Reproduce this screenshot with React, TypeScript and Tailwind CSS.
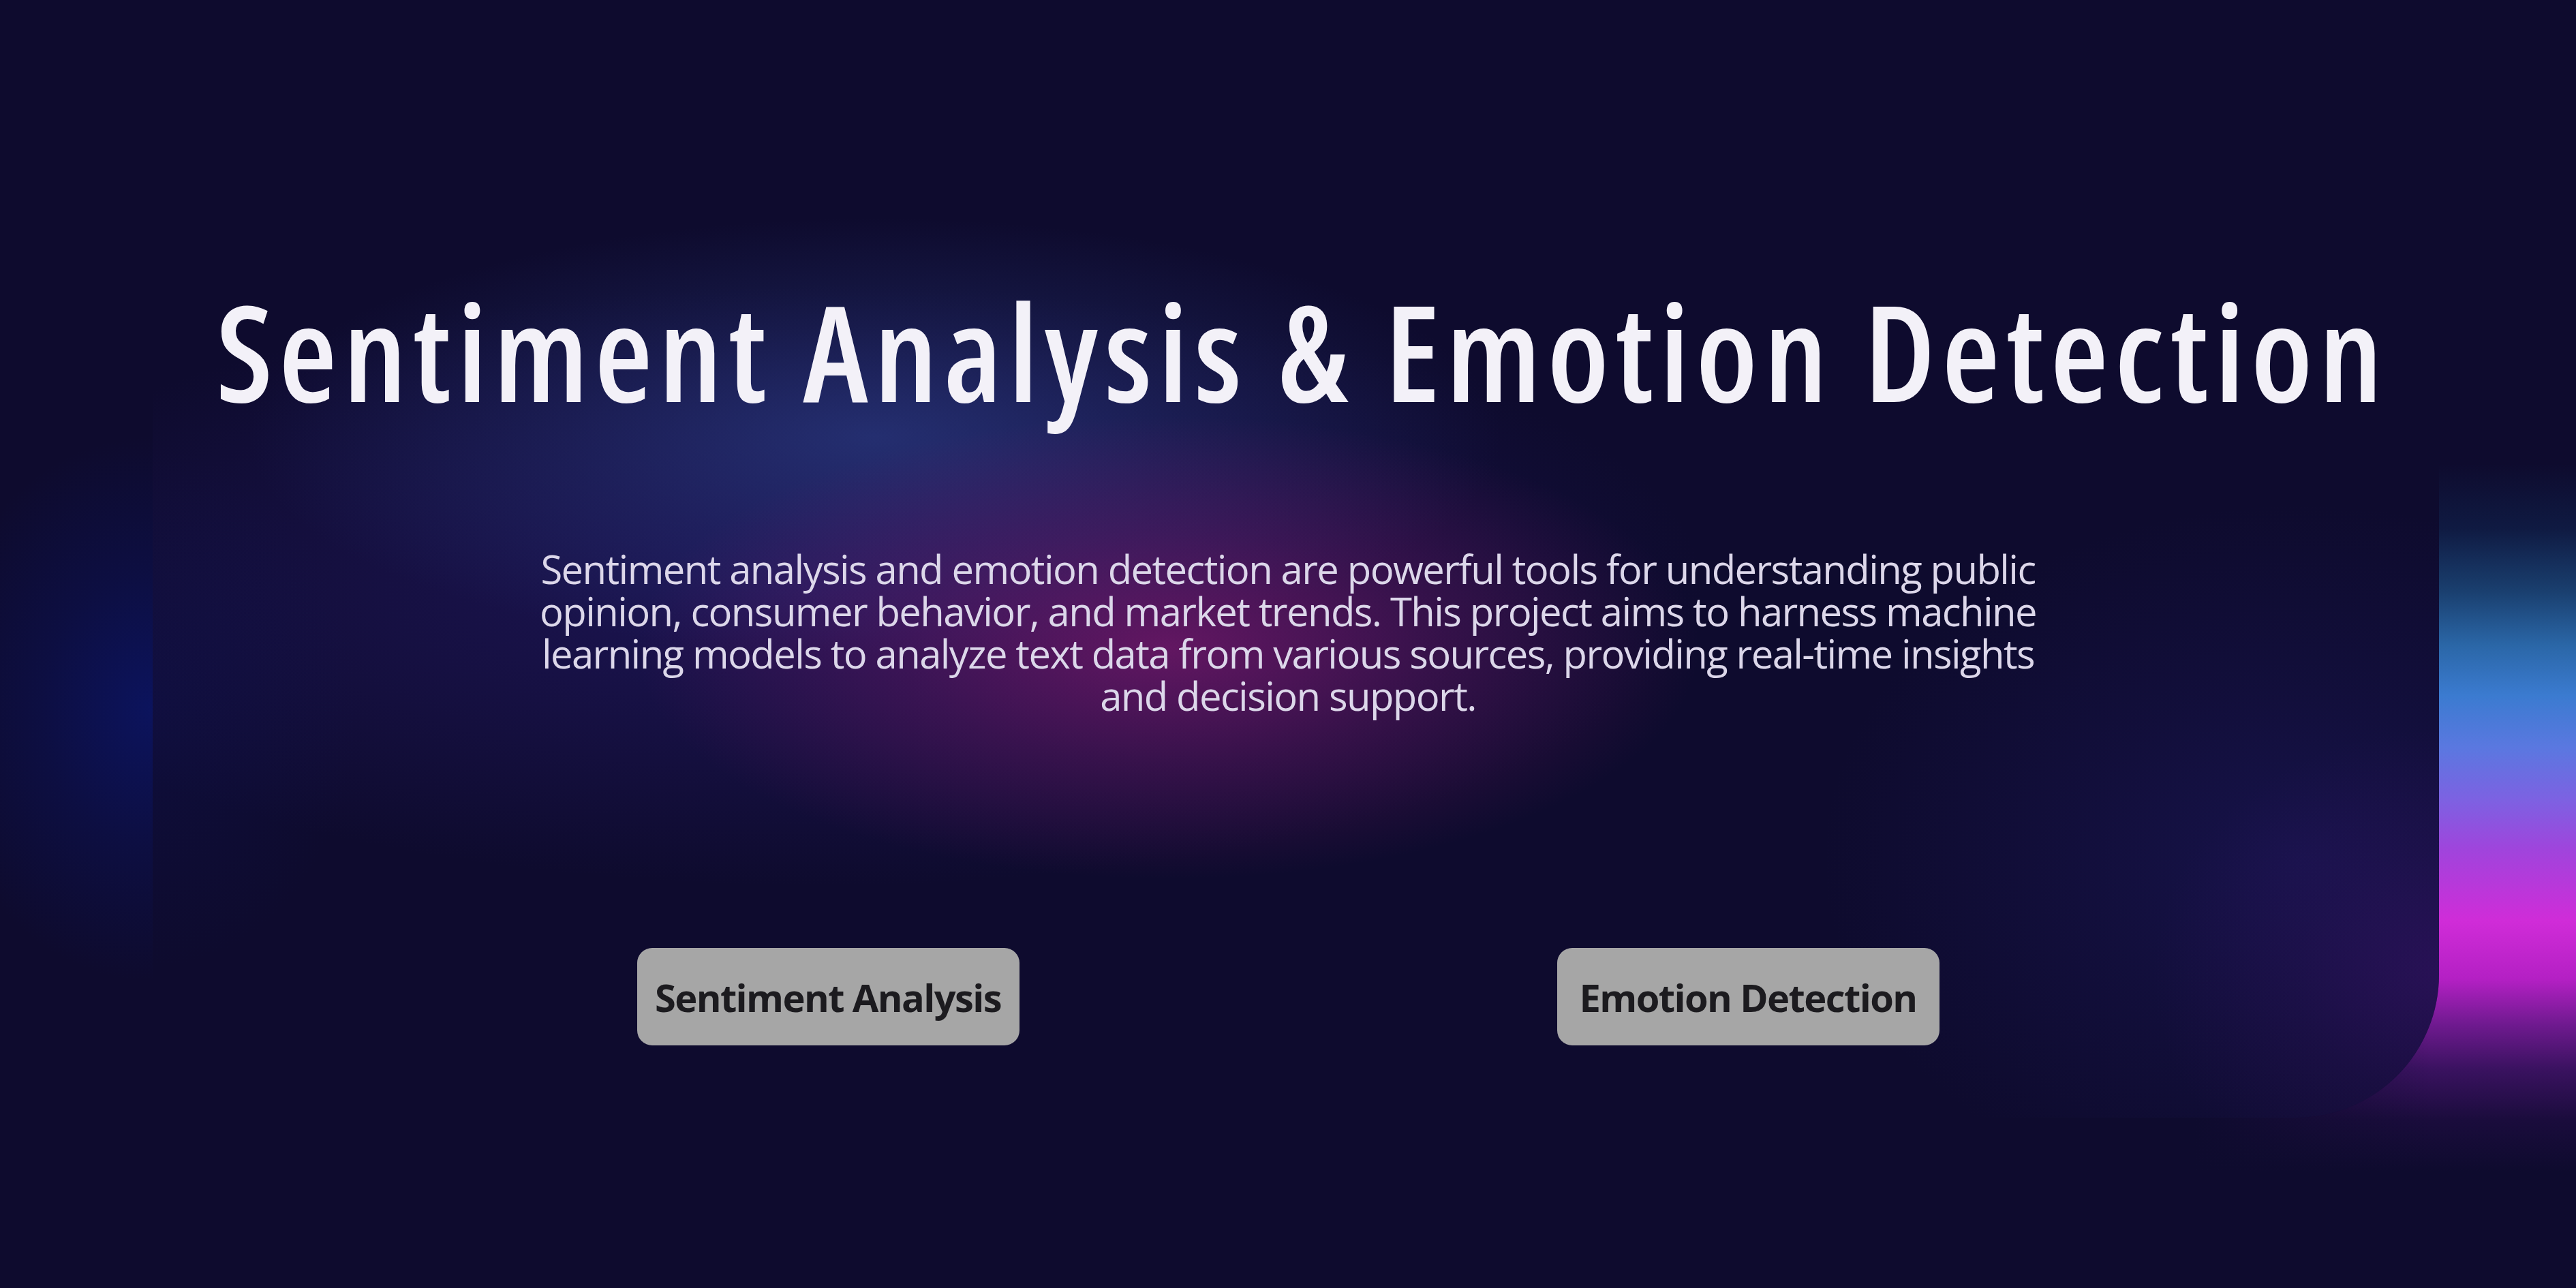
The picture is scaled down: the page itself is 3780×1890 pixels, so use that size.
import React from "react";

export default function App() {
  return (
    <div className="relative w-[3780px] h-[1890px] overflow-hidden bg-[#0e0b2e] font-['Open_Sans','Noto_Sans',sans-serif]">
      {/* outside-left blue glow */}
      <div className="absolute inset-0 bg-[radial-gradient(ellipse_330px_400px_at_224px_1040px,rgba(10,25,125,0.6),rgba(10,25,125,0.25)_50%,transparent_100%)]" />
      {/* right gradient strip */}
      <div className="absolute right-0 top-0 bottom-0 w-[560px] bg-[linear-gradient(to_bottom,#0e0b2e_0%,#0e0b2e_36%,#0f1a42_41%,#1a4070_46%,#2a66a6_50%,#3b7bd0_54%,#5a78e0_58%,#7c62e2_62%,#a044dc_66%,#d02cd8_71.5%,#b420c4_76%,#701a90_79.5%,#3a1260_83%,#1a0c3c_87%,#0e0b2e_91%,#0e0b2e_100%)]" />
      <div className="absolute right-0 top-0 bottom-0 w-[560px] bg-[linear-gradient(to_right,#0e0b2e_0%,rgba(14,11,46,0.45)_30%,rgba(14,11,46,0)_62%,rgba(14,11,46,0)_100%)]" />
      {/* main panel */}
      <div className="absolute left-[224px] right-[201px] top-0 bottom-[250px] rounded-br-[210px] overflow-hidden bg-[#0e0b2e]">
        <div className="absolute inset-0 bg-[radial-gradient(ellipse_1300px_440px_at_976px_860px,rgba(40,28,112,0.58),rgba(40,28,112,0.27)_55%,transparent_100%)]" />
        <div className="absolute inset-0 bg-[radial-gradient(ellipse_920px_320px_at_1060px_640px,rgba(45,65,140,0.62),rgba(45,65,140,0.28)_50%,transparent_100%)]" />
        <div className="absolute inset-0 bg-[radial-gradient(ellipse_780px_340px_at_1490px_950px,rgba(130,25,110,0.7),rgba(130,25,110,0.32)_50%,transparent_100%)]" />
        <div className="absolute inset-0 bg-[radial-gradient(ellipse_700px_520px_at_3150px_1260px,rgba(35,30,115,0.4),rgba(35,30,115,0.18)_50%,transparent_100%)]" />
        <div className="absolute inset-0 bg-[radial-gradient(ellipse_420px_360px_at_3355px_1430px,rgba(75,20,125,0.38),rgba(75,20,125,0.15)_50%,transparent_100%)]" />
        <div className="absolute inset-0 bg-[radial-gradient(ellipse_300px_380px_at_0px_1040px,rgba(15,20,90,0.3),transparent_100%)]" />
      </div>

      {/* content */}
      <div className="relative flex flex-col items-center pt-[416px]">
        <h1 className="pl-[42px] text-[196px] leading-[196px] tracking-[9px] font-semibold text-[#f3f1f8] [font-stretch:75%] whitespace-nowrap">
          Sentiment Analysis &amp; Emotion Detection
        </h1>
        <p className="mt-[192px] text-center text-[58px] leading-[62px] tracking-[-1.6px] text-[#dcd7ea] whitespace-nowrap">
          Sentiment analysis and emotion detection are powerful tools for understanding public
          <br />
          opinion, consumer behavior, and market trends. This project aims to harness machine
          <br />
          learning models to analyze text data from various sources, providing real-time insights
          <br />
          and decision support.
        </p>
        <div className="mt-[339px] flex gap-[789px]">
          <button className="w-[561px] h-[143px] rounded-[22px] bg-[#a6a6a6] flex items-center justify-center text-[56px] tracking-[-1.6px] font-bold text-[#1c1b1f]">
            Sentiment Analysis
          </button>
          <button className="w-[561px] h-[143px] rounded-[22px] bg-[#a6a6a6] flex items-center justify-center text-[56px] tracking-[-1.6px] font-bold text-[#1c1b1f]">
            Emotion Detection
          </button>
        </div>
      </div>
    </div>
  );
}
